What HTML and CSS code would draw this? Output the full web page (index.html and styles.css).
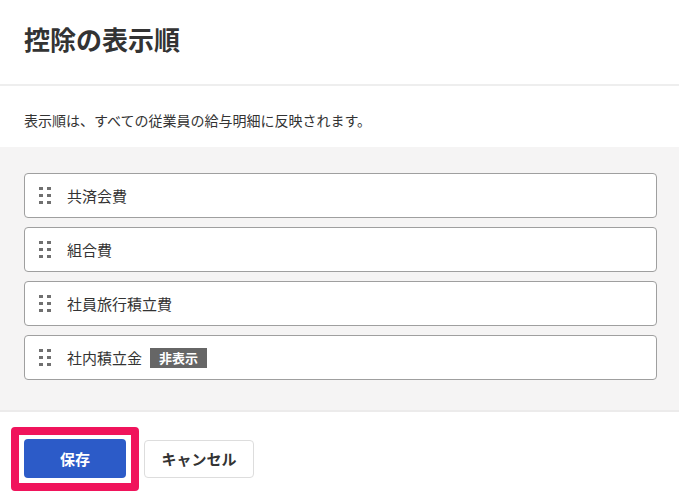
FILE: index.html
```html
<!DOCTYPE html>
<html lang="ja">
<head>
<meta charset="utf-8">
<title>控除の表示順</title>
<link rel="stylesheet" href="styles.css">
</head>
<body>
<div class="modal">
  <header class="modal-header">
    <h1 class="modal-title">控除の表示順</h1>
  </header>
  <p class="modal-desc">表示順は、すべての従業員の給与明細に反映されます。</p>
  <section class="list-area">
    <ul class="sort-list">
      <li class="sort-item"><span class="handle"><i></i><i></i><i></i><i></i><i></i><i></i></span><span class="item-label">共済会費</span></li>
      <li class="sort-item"><span class="handle"><i></i><i></i><i></i><i></i><i></i><i></i></span><span class="item-label">組合費</span></li>
      <li class="sort-item"><span class="handle"><i></i><i></i><i></i><i></i><i></i><i></i></span><span class="item-label">社員旅行積立費</span></li>
      <li class="sort-item"><span class="handle"><i></i><i></i><i></i><i></i><i></i><i></i></span><span class="item-label">社内積立金</span><span class="badge">非表示</span></li>
    </ul>
  </section>
  <footer class="modal-footer">
    <button class="btn btn-primary highlighted">保存</button>
    <button class="btn btn-secondary">キャンセル</button>
  </footer>
</div>
</body>
</html>
```

FILE: styles.css
```css
* { box-sizing: border-box; }
html, body { margin: 0; padding: 0; background: #fff; }
body {
  font-family: "Noto Sans CJK JP", "Noto Sans", sans-serif;
  color: #333;
}
.modal { width: 679px; }
.modal-header {
  height: 86px;
  padding: 21px 24px 0;
  border-bottom: 2px solid #eeeeee;
}
.modal-title {
  margin: 0;
  font-size: 26px;
  line-height: 36px;
  font-weight: 700;
  color: #333;
}
.modal-desc {
  margin: 0;
  height: 61px;
  padding: 24px 24px 0;
  font-size: 14px;
  line-height: 20px;
  color: #333;
}
.list-area {
  background: #f5f4f4;
  padding: 26px 22px 30px 24px;
  border-bottom: 2px solid #ecebeb;
}
.sort-list {
  list-style: none;
  margin: 0;
  padding: 0;
  display: flex;
  flex-direction: column;
  gap: 9px;
}
.sort-item {
  height: 45px;
  background: #fff;
  border: 1px solid #9f9f9f;
  border-radius: 4px;
  display: flex;
  align-items: center;
  padding-left: 14px;
}
.handle {
  display: grid;
  grid-template-columns: 4px 4px;
  grid-auto-rows: 3px;
  column-gap: 4px;
  row-gap: 4px;
  margin-right: 16px;
}
.handle i {
  display: block;
  width: 4px;
  height: 3px;
  background: #707070;
}
.item-label {
  font-size: 15px;
  line-height: 20px;
  color: #333;
}
.badge {
  margin-left: 8px;
  height: 20px;
  padding: 0 9px;
  background: #666;
  color: #fff;
  font-size: 13px;
  font-weight: 700;
  line-height: 20px;
}
.modal-footer {
  display: flex;
  align-items: center;
  gap: 18px;
  padding: 27px 24px 22px;
}
.btn {
  font-family: "Noto Sans CJK JP", "Noto Sans", sans-serif;
  font-size: 15px;
  font-weight: 700;
  border-radius: 4px;
  cursor: pointer;
}
.btn-primary {
  width: 102px;
  height: 39px;
  background: #2c5bc8;
  color: #fff;
  border: none;
}
.btn-secondary {
  width: 110px;
  height: 38px;
  background: #fff;
  color: #333;
  border: 1px solid #dddddd;
}
.highlighted { position: relative; }
.highlighted::after {
  content: "";
  position: absolute;
  top: -12px;
  left: -13px;
  right: -13px;
  bottom: -13px;
  border: 8px solid #f0145c;
  border-radius: 4px;
  pointer-events: none;
}
```
